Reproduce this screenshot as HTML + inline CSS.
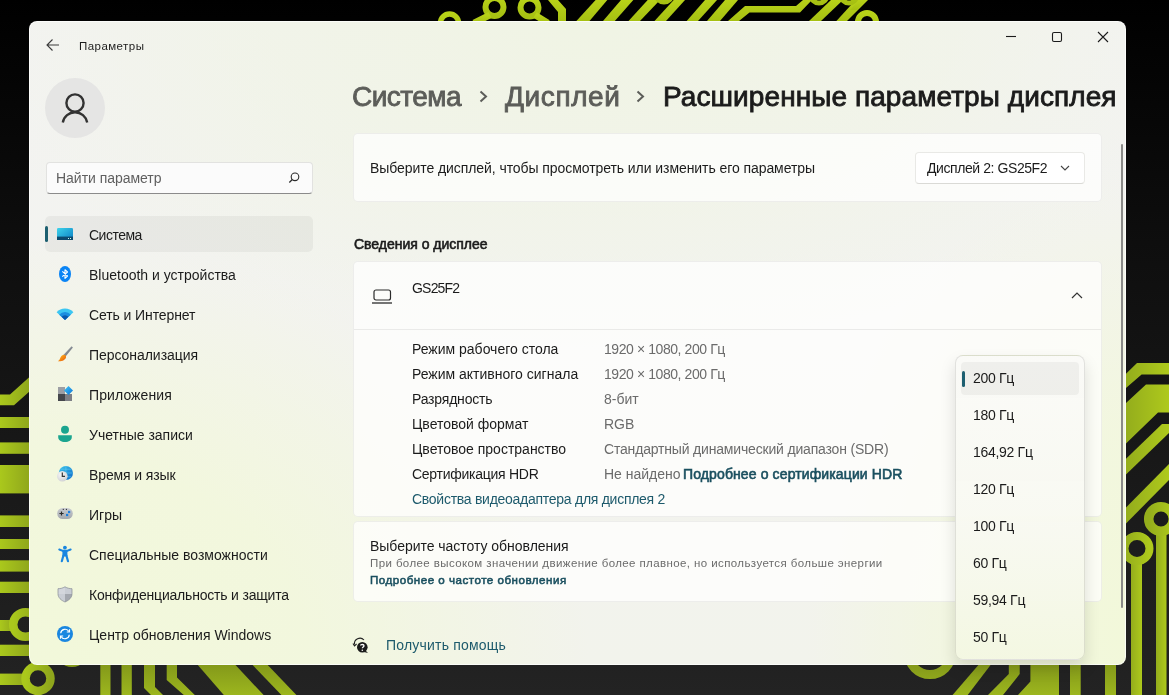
<!DOCTYPE html>
<html><head><meta charset="utf-8"><style>
html,body{margin:0;padding:0;width:1169px;height:695px;overflow:hidden;background:#111;}
body{position:relative;font-family:"Liberation Sans", sans-serif;}
.t{position:absolute;line-height:1;white-space:nowrap;will-change:transform;}
</style></head><body>
<svg width="1169" height="695" style="position:absolute;left:0;top:0">
<defs>
<linearGradient id="dk" x1="0" y1="0" x2="0" y2="1"><stop offset="0" stop-color="#000"/><stop offset="0.35" stop-color="#0e0e0e"/><stop offset="1" stop-color="#232323"/></linearGradient>
<linearGradient id="lt" x1="0" y1="0" x2="0" y2="1"><stop offset="0" stop-color="#b8d218"/><stop offset="1" stop-color="#a6c012"/></linearGradient>
<linearGradient id="ll" x1="0" y1="0" x2="1" y2="0"><stop offset="0" stop-color="#aac81c"/><stop offset="1" stop-color="#8fa61c"/></linearGradient>
<linearGradient id="lb" gradientUnits="userSpaceOnUse" x1="0" y1="665" x2="0" y2="695"><stop offset="0" stop-color="#84991a"/><stop offset="1" stop-color="#9cb61e"/></linearGradient>
<linearGradient id="lr" x1="0" y1="0" x2="1" y2="0"><stop offset="0" stop-color="#94ad1c"/><stop offset="1" stop-color="#aec91c"/></linearGradient>
</defs>
<rect width="1169" height="695" fill="url(#dk)"/>
<!-- top strip -->
<g fill="url(#lt)" stroke="none">
 <polygon points="576.4,21 589.5,21 607.3,0 595.6,0"/>
 <polygon points="603,21 614.8,21 633.3,0 621,0"/>
 <polygon points="628.5,21 640,21 660,0 647.7,0"/>
 <polygon points="654.5,21 666,21 685,0 673.7,0"/>
 <polygon points="686.7,21 698,21 717,0 705,0"/>
 <polygon points="707,21 720,21 738,0 725,0"/>
 <polygon points="728,21 739,21 749.5,12.5 800,12.5 812,0 803,0 796,6 745,6"/>
 <polygon points="809,21 821,21 843,0 831,0"/>
 <polygon points="836.4,21 847,21 868,0 855.6,0"/>
 <polygon points="850,10 857,10 866,0 859,0"/>
 <polygon points="548,0 558,0 566,9 566,21 558,21 558,12"/>
</g>
<g fill="none" stroke="url(#lt)">
 <circle cx="449.5" cy="23" r="9" stroke-width="5.5"/>
 <circle cx="494.5" cy="7" r="9" stroke-width="6"/>
 <path d="M490 15 L474 23" stroke-width="6.5"/>
 <circle cx="529.5" cy="7.5" r="9" stroke-width="6"/>
 <path d="M535 15 L548 23" stroke-width="6.5"/>
 <circle cx="664" cy="-6" r="8" stroke-width="5"/>
 <circle cx="819" cy="-5" r="8" stroke-width="5"/>
 <circle cx="849" cy="-5" r="8" stroke-width="5"/>
 <circle cx="867" cy="22" r="9" stroke-width="6"/>
</g>
<!-- left strip -->
<g fill="url(#ll)" stroke="none">
 <polygon points="0,394.5 10,394.5 30,376.5 30,391 14,405.3 0,405.3"/>
 <rect x="0" y="417" width="30" height="11"/>
 <rect x="0" y="442.4" width="30" height="11.4"/>
 <rect x="0" y="465" width="30" height="28.4"/>
 <rect x="0" y="515.4" width="30" height="11.6"/>
 <rect x="0" y="539" width="30" height="10"/>
 <rect x="0" y="560.3" width="30" height="11.3"/>
 <rect x="0" y="581.7" width="30" height="11.3"/>
 <rect x="0" y="620" width="15" height="11"/>
 <rect x="0" y="644.7" width="30" height="11.3"/>
 <rect x="0" y="673.6" width="28" height="11.4"/>
</g>
<g fill="none" stroke="url(#ll)">
 <circle cx="25.5" cy="624.5" r="12.3" stroke-width="8.5"/>
 <circle cx="38" cy="678.5" r="12.5" stroke-width="8.5"/>
</g>
<!-- bottom strip -->
<g fill="url(#lb)" stroke="none">
 <rect x="100.3" y="660" width="10.2" height="40"/>
 <rect x="121.5" y="660" width="10.3" height="40"/>
 <polygon points="144,660 155,660 155,687 163,695 151,695 144,688"/>
 <polygon points="166.7,660 177,660 177,677.6 194.8,695 183.8,695 166.7,680"/>
 <polygon points="197.8,665 235.5,665 263.6,695 223.8,695"/>
 <polygon points="252.6,665 267.7,665 296.4,695 281.4,695"/>
 <polygon points="982.7,660 994.4,660 967.7,695 952.6,695"/>
 <polygon points="1008.8,660 1019.7,660 1019.7,674 1003,695 988,695 1008.8,674"/>
 <polygon points="1030.4,660 1059,660 1059,695 1018,695 1030.4,681.5"/>
 <rect x="1070" y="660" width="10.7" height="40"/>
 <rect x="1105" y="660" width="11" height="40"/>
</g>
<g fill="none" stroke="url(#lb)">
 <circle cx="72" cy="650" r="13" stroke-width="8"/>
 <circle cx="930" cy="653" r="21.5" stroke-width="9"/>
</g>
<!-- right strip -->
<g fill="url(#lr)" stroke="none">
 <polygon points="1126,373.7 1137,363 1169,363 1169,374.5 1141.6,374.5 1126,388"/>
 <polygon points="1126,403 1146,384.5 1169,384.5 1169,412.6 1158,412.6 1126,443.5"/>
 <polygon points="1126,458.7 1162,424 1169,424 1169,433 1126,474.5"/>
 <polygon points="1126,507.6 1169,464 1169,480 1126,523.5"/>
 <rect x="1131" y="557" width="11" height="150"/>
 <rect x="1156" y="527" width="10.5" height="180"/>
</g>
<g fill="none" stroke="url(#lr)">
 <circle cx="1137" cy="548.5" r="12.5" stroke-width="8"/>
 <circle cx="1161" cy="519" r="12.3" stroke-width="9.5"/>
</g>
</svg>
<div style="position:absolute;left:29px;top:21px;width:1097px;height:644px;background:radial-gradient(ellipse 560px 430px at 0px 644px, rgba(242,248,218,1) 0%, rgba(242,248,218,0.8) 50%, rgba(242,248,218,0) 100%),radial-gradient(ellipse 320px 470px at 1097px 620px, rgba(242,248,218,1) 0%, rgba(242,248,218,0.75) 45%, rgba(242,248,218,0) 100%),radial-gradient(ellipse 640px 330px at 560px 0px, rgba(240,244,228,1) 0%, rgba(240,244,228,0.6) 55%, rgba(240,244,228,0) 100%),linear-gradient(to bottom, #f3f3f2 0%, #f2f3ec 100%);border-radius:8px;overflow:hidden;box-shadow:inset 0 0 0 1px rgba(255,255,255,0.7);"></div>
<svg style="position:absolute;left:44px;top:37px" width="18" height="16"><path d="M3 8 H15 M8.5 2.5 L3 8 L8.5 13.5" fill="none" stroke="#3b3b3b" stroke-width="1.1"/></svg>
<div class="t" style="left:79.3px;top:40.57px;font-size:11.5px;color:#1d1d1d;letter-spacing:0.45px;">Параметры</div>
<svg style="position:absolute;left:1000px;top:28px" width="120" height="20"><path d="M6 8.5 H16" stroke="#1b1b1b" stroke-width="1.1"/><rect x="52.5" y="4.5" width="9" height="9" rx="1.5" fill="none" stroke="#1b1b1b" stroke-width="1.1"/><path d="M98 4 L108 14 M108 4 L98 14" stroke="#1b1b1b" stroke-width="1.1"/></svg>
<div style="position:absolute;left:45px;top:78px;width:60px;height:60px;border-radius:50%;background:#e5e5e4;"></div>
<svg style="position:absolute;left:45px;top:78px" width="60" height="60"><circle cx="30" cy="25" r="8.6" fill="none" stroke="#323232" stroke-width="2.4"/><path d="M17.8 44.5 A12.4 12.4 0 0 1 42.2 44.5" fill="none" stroke="#323232" stroke-width="2.4"/></svg>
<div style="position:absolute;left:46px;top:162px;width:267px;height:32px;box-sizing:border-box;border-radius:4px;background:#fbfbfb;border:1px solid #e2e2e0;border-bottom:1px solid #8b8b8b;"></div>
<div class="t" style="left:55.5px;top:171.15px;font-size:14px;color:#5f5f5f;letter-spacing:-0.03px;">Найти параметр</div>
<svg style="position:absolute;left:285px;top:170px" width="16" height="16"><circle cx="10" cy="6.8" r="3.8" fill="none" stroke="#2b2b2b" stroke-width="1.1"/><path d="M7.3 9.5 L4.3 12.5" stroke="#2b2b2b" stroke-width="1.2"/></svg>
<div style="position:absolute;left:45px;top:216px;width:268px;height:36px;border-radius:5px;background:rgba(0,0,0,0.045);"></div>
<div style="position:absolute;left:45px;top:226px;width:3px;height:16px;border-radius:2px;background:#1d5f70;"></div>
<div class="t" style="left:89px;top:228.15px;font-size:14px;color:#1b1b1b;letter-spacing:-0.5px;">Система</div>
<div class="t" style="left:89px;top:268.15px;font-size:14px;color:#1b1b1b;">Bluetooth и устройства</div>
<div class="t" style="left:89px;top:308.15px;font-size:14px;color:#1b1b1b;letter-spacing:-0.1px;">Сеть и Интернет</div>
<div class="t" style="left:89px;top:348.15px;font-size:14px;color:#1b1b1b;letter-spacing:-0.05px;">Персонализация</div>
<div class="t" style="left:89px;top:388.15px;font-size:14px;color:#1b1b1b;letter-spacing:0.1px;">Приложения</div>
<div class="t" style="left:89px;top:428.15px;font-size:14px;color:#1b1b1b;">Учетные записи</div>
<div class="t" style="left:89px;top:468.15px;font-size:14px;color:#1b1b1b;letter-spacing:-0.12px;">Время и язык</div>
<div class="t" style="left:89px;top:508.15px;font-size:14px;color:#1b1b1b;">Игры</div>
<div class="t" style="left:89px;top:548.15px;font-size:14px;color:#1b1b1b;">Специальные возможности</div>
<div class="t" style="left:89px;top:588.15px;font-size:14px;color:#1b1b1b;letter-spacing:-0.2px;">Конфиденциальность и защита</div>
<div class="t" style="left:89px;top:628.15px;font-size:14px;color:#1b1b1b;">Центр обновления Windows</div>

<svg style="position:absolute;left:55px;top:224px" width="20" height="20">
 <defs><linearGradient id="sysg" x1="0" y1="0" x2="1" y2="1"><stop offset="0" stop-color="#3fd3ea"/><stop offset="1" stop-color="#0a7fc4"/></linearGradient></defs>
 <rect x="2" y="4" width="16" height="12" rx="1.3" fill="url(#sysg)"/>
 <rect x="2" y="12.6" width="16" height="3.4" fill="#0d4a6e"/>
 <rect x="13" y="14" width="1" height="1" fill="#cfe"/><rect x="15" y="14" width="1" height="1" fill="#cfe"/>
</svg>
<svg style="position:absolute;left:55px;top:264px" width="20" height="20">
 <ellipse cx="10" cy="10" rx="6" ry="8" fill="#0a84f5"/>
 <path d="M7.3 7.3 L12.5 12 L10 14.3 V5.7 L12.5 8 L7.3 12.7" fill="none" stroke="#fff" stroke-width="1.1" stroke-linejoin="round"/>
</svg>
<svg style="position:absolute;left:55px;top:304px" width="20" height="20">
 <path d="M10 15.9 L1.6 8.34 A11.3 11.3 0 0 1 18.4 8.34 Z" fill="#3cc6f2"/>
 <path d="M10 15.9 L4.2 10.68 A7.8 7.8 0 0 1 15.8 10.68 Z" fill="#1a8ee0"/>
 <path d="M10 15.9 L6.58 12.82 A4.6 4.6 0 0 1 13.42 12.82 Z" fill="#0a58ad"/>
</svg>
<svg style="position:absolute;left:55px;top:344px" width="20" height="20">
 <defs><linearGradient id="brh" x1="0" y1="0" x2="1" y2="1"><stop offset="0" stop-color="#a4aab2"/><stop offset="1" stop-color="#646a72"/></linearGradient>
 <linearGradient id="brt" x1="0" y1="0" x2="1" y2="1"><stop offset="0" stop-color="#ffc21a"/><stop offset="1" stop-color="#e8560c"/></linearGradient></defs>
 <path d="M16.6 2.3 L17.9 3.6 L10.6 12.6 L8.4 11 Z" fill="url(#brh)"/>
 <path d="M8.2 10.9 C10 10.4 11.5 11.6 11 13.4 C10.4 15.6 7.2 17.6 2.8 17.2 C4.4 16.4 4.8 15 5.6 13.2 C6.2 11.9 7 11.1 8.2 10.9 Z" fill="url(#brt)"/>
</svg>
<svg style="position:absolute;left:55px;top:384px" width="20" height="20">
 <defs><linearGradient id="apd" x1="0" y1="0" x2="1" y2="1"><stop offset="0" stop-color="#42c6f7"/><stop offset="1" stop-color="#0b72d6"/></linearGradient></defs>
 <rect x="3" y="3" width="7" height="7" fill="#9c9ea4"/>
 <rect x="3" y="10" width="7" height="7" fill="#45474c"/>
 <rect x="10" y="10" width="7" height="7" fill="#7d7f85"/>
 <path d="M13.5 1.9 L18 6.4 L13.5 10.9 L9 6.4 Z" fill="url(#apd)"/>
</svg>
<svg style="position:absolute;left:55px;top:424px" width="20" height="20">
 <circle cx="10" cy="5.8" r="4" fill="#1ba58f"/>
 <path d="M3.2 11.3 H16.8 V13 C16.8 16.3 13.8 18 10 18 C6.2 18 3.2 16.3 3.2 13 Z" fill="#1ba58f"/>
</svg>
<svg style="position:absolute;left:55px;top:464px" width="20" height="20">
 <defs><linearGradient id="glb" x1="0" y1="0" x2="1" y2="1"><stop offset="0" stop-color="#3fc8ec"/><stop offset="1" stop-color="#0b66c8"/></linearGradient>
 <radialGradient id="clk" cx="0.4" cy="0.35" r="0.7"><stop offset="0" stop-color="#f8f8f8"/><stop offset="1" stop-color="#cfd0d3"/></radialGradient></defs>
 <circle cx="10.9" cy="9" r="7.1" fill="url(#glb)"/>
 <path d="M4 9 H17.8 M10.9 2 V16 M5.5 5.2 H16.3 M5.5 12.8 H16.3" stroke="#6fd8f6" stroke-width="0.6" fill="none" opacity="0.8"/>
 <circle cx="7.3" cy="12.2" r="5.3" fill="url(#clk)"/>
 <path d="M7.3 8.6 V12.4 H10" stroke="#333" stroke-width="1.2" fill="none"/>
</svg>
<svg style="position:absolute;left:55px;top:504px" width="20" height="20">
 <defs><linearGradient id="gmp" x1="0" y1="0" x2="0" y2="1"><stop offset="0" stop-color="#c9ccd1"/><stop offset="1" stop-color="#a4a8ae"/></linearGradient></defs>
 <rect x="2.2" y="4" width="15.6" height="11" rx="5.5" fill="url(#gmp)"/>
 <path d="M4.4 9.5 H8.6 M6.5 7.4 V11.6" stroke="#2b2b2b" stroke-width="1.2"/>
 <circle cx="8.3" cy="5.4" r="0.6" fill="#333"/><circle cx="11.4" cy="5.4" r="0.6" fill="#333"/>
 <rect x="13" y="6.9" width="2.2" height="2.2" fill="#1a7fe0"/><rect x="11" y="9.9" width="2.2" height="2.2" fill="#1a7fe0"/>
</svg>
<svg style="position:absolute;left:55px;top:544px" width="20" height="20">
 <circle cx="9.9" cy="3.6" r="1.9" fill="#1a86e0"/>
 <path d="M4.3 5.5 L7.8 6.9 H12.1 L15.6 5.5" stroke="#1a86e0" stroke-width="2.1" fill="none" stroke-linecap="round" stroke-linejoin="round"/>
 <rect x="7.4" y="6.4" width="5" height="6" rx="0.6" fill="#1a86e0"/>
 <path d="M8.4 11.5 L6.8 17.2 M11.4 11.5 L13 17.2" stroke="#1a86e0" stroke-width="2.2" fill="none" stroke-linecap="round"/>
</svg>
<svg style="position:absolute;left:55px;top:584px" width="20" height="20">
 <defs><clipPath id="shc"><path d="M10 2.8 C12.3 4.2 14.8 4.7 17 4.7 V9.8 C17 13.6 14 16.3 10 18 C6 16.3 3 13.6 3 9.8 V4.7 C5.2 4.7 7.7 4.2 10 2.8 Z"/></clipPath></defs>
 <path d="M10 2.8 C12.3 4.2 14.8 4.7 17 4.7 V9.8 C17 13.6 14 16.3 10 18 C6 16.3 3 13.6 3 9.8 V4.7 C5.2 4.7 7.7 4.2 10 2.8 Z" fill="#c9cdd4"/>
 <g clip-path="url(#shc)"><rect x="10" y="10" width="10" height="10" fill="#a3a7ae"/><rect x="3" y="2" width="7" height="8" fill="#d3d6dc"/></g>
 <path d="M10 2.8 C12.3 4.2 14.8 4.7 17 4.7 V9.8 C17 13.6 14 16.3 10 18 C6 16.3 3 13.6 3 9.8 V4.7 C5.2 4.7 7.7 4.2 10 2.8 Z" fill="none" stroke="#878b93" stroke-width="0.7"/>
</svg>
<svg style="position:absolute;left:55px;top:624px" width="20" height="20">
 <circle cx="10" cy="10" r="8" fill="#1a86e0"/>
 <path d="M5.7 9.3 A4.4 4.4 0 0 1 13.9 7.5 M14.3 10.7 A4.4 4.4 0 0 1 6.1 12.5" stroke="#fff" stroke-width="1.2" fill="none"/>
 <path d="M14.5 5.3 V8 H11.8 M5.5 14.7 V12 H8.2" stroke="#fff" stroke-width="1.2" fill="none"/>
</svg>

<div class="t" style="left:352px;top:82.80px;font-size:28px;color:#5c5d59;letter-spacing:-0.55px;-webkit-text-stroke:0.85px #5c5d59;">Система</div>
<svg style="position:absolute;left:475px;top:86px" width="20" height="20"><path d="M5.5 5.5 L11 10.5 L5.5 15.5" fill="none" stroke="#5c5d59" stroke-width="2"/></svg>
<div class="t" style="left:505px;top:82.80px;font-size:28px;color:#5c5d59;letter-spacing:0.6px;-webkit-text-stroke:0.85px #5c5d59;">Дисплей</div>
<svg style="position:absolute;left:632px;top:86px" width="20" height="20"><path d="M5.5 5.5 L11 10.5 L5.5 15.5" fill="none" stroke="#5c5d59" stroke-width="2"/></svg>
<div class="t" style="left:662.5px;top:82.80px;font-size:28px;color:#1b1b1b;letter-spacing:0.08px;-webkit-text-stroke:0.85px #1b1b1b;">Расширенные параметры дисплея</div>
<div style="position:absolute;left:353px;top:133px;width:749px;height:69px;box-sizing:border-box;border-radius:5px;background:rgba(255,255,255,0.72);border:1px solid rgba(0,0,0,0.06);"></div>
<div class="t" style="left:369.5px;top:161.15px;font-size:14px;color:#1b1b1b;letter-spacing:-0.07px;">Выберите дисплей, чтобы просмотреть или изменить его параметры</div>
<div style="position:absolute;left:915px;top:152px;width:170px;height:32px;box-sizing:border-box;border-radius:4px;background:rgba(255,255,255,0.85);border:1px solid #e9e9e6;border-bottom-color:#dadad6;"></div>
<div class="t" style="left:927px;top:161.15px;font-size:14px;color:#1b1b1b;letter-spacing:-0.42px;">Дисплей 2: GS25F2</div>
<svg style="position:absolute;left:1058px;top:162px" width="14" height="12"><path d="M3 4 L7 8 L11 4" fill="none" stroke="#444" stroke-width="1.1"/></svg>
<div class="t" style="left:353.5px;top:237.15px;font-size:14px;color:#1b1b1b;letter-spacing:-0.02px;-webkit-text-stroke:0.6px #1b1b1b;">Сведения о дисплее</div>
<div style="position:absolute;left:353px;top:261px;width:749px;height:256px;box-sizing:border-box;border-radius:5px;background:rgba(255,255,255,0.72);border:1px solid rgba(0,0,0,0.06);"></div>
<div style="position:absolute;left:354px;top:329px;width:747px;height:1px;background:rgba(0,0,0,0.07);"></div>
<svg style="position:absolute;left:370px;top:285px" width="24" height="22"><rect x="4" y="5" width="16.5" height="10" rx="2" fill="none" stroke="#2b2b2b" stroke-width="1.2"/><path d="M2 18 H22" stroke="#2b2b2b" stroke-width="1.3"/></svg>
<div class="t" style="left:411.5px;top:281.15px;font-size:14px;color:#1b1b1b;letter-spacing:-0.8px;">GS25F2</div>
<svg style="position:absolute;left:1068px;top:288px" width="18" height="14"><path d="M4 10 L9 5 L14 10" fill="none" stroke="#333" stroke-width="1.2"/></svg>
<div class="t" style="left:411.5px;top:342.15px;font-size:14px;color:#1b1b1b;">Режим рабочего стола</div>
<div class="t" style="left:604px;top:342.15px;font-size:14px;color:#6b6b6b;letter-spacing:-0.42px;">1920 × 1080, 200 Гц</div>
<div class="t" style="left:411.5px;top:367.15px;font-size:14px;color:#1b1b1b;">Режим активного сигнала</div>
<div class="t" style="left:604px;top:367.15px;font-size:14px;color:#6b6b6b;letter-spacing:-0.42px;">1920 × 1080, 200 Гц</div>
<div class="t" style="left:411.5px;top:392.15px;font-size:14px;color:#1b1b1b;letter-spacing:-0.2px;">Разрядность</div>
<div class="t" style="left:604px;top:392.15px;font-size:14px;color:#6b6b6b;">8-бит</div>
<div class="t" style="left:411.5px;top:417.15px;font-size:14px;color:#1b1b1b;">Цветовой формат</div>
<div class="t" style="left:604px;top:417.15px;font-size:14px;color:#6b6b6b;">RGB</div>
<div class="t" style="left:411.5px;top:442.15px;font-size:14px;color:#1b1b1b;">Цветовое пространство</div>
<div class="t" style="left:604px;top:442.15px;font-size:14px;color:#6b6b6b;letter-spacing:-0.18px;">Стандартный динамический диапазон (SDR)</div>
<div class="t" style="left:411.5px;top:467.15px;font-size:14px;color:#1b1b1b;letter-spacing:-0.27px;">Сертификация HDR</div>
<div class="t" style="left:604px;top:467.15px;font-size:14px;color:#6b6b6b;">Не найдено</div>
<div class="t" style="left:683.3px;top:467.15px;font-size:14px;color:#1a4f5f;letter-spacing:0.12px;-webkit-text-stroke:0.6px #1a4f5f;">Подробнее о сертификации HDR</div>
<div class="t" style="left:411.5px;top:492.15px;font-size:14px;color:#1d5a6c;letter-spacing:-0.27px;">Свойства видеоадаптера для дисплея 2</div>
<div style="position:absolute;left:353px;top:521px;width:749px;height:81px;box-sizing:border-box;border-radius:5px;background:rgba(255,255,255,0.72);border:1px solid rgba(0,0,0,0.06);"></div>
<div class="t" style="left:369.5px;top:539.15px;font-size:14px;color:#1b1b1b;letter-spacing:-0.03px;">Выберите частоту обновления</div>
<div class="t" style="left:369.5px;top:557.77px;font-size:11.5px;color:#6b6b6b;letter-spacing:0.4px;">При более высоком значении движение более плавное, но используется больше энергии</div>
<div class="t" style="left:370px;top:574.18px;font-size:11.6px;color:#1a4f5f;letter-spacing:0.5px;-webkit-text-stroke:0.55px #1a4f5f;">Подробнее о частоте обновления</div>
<svg style="position:absolute;left:351px;top:636px" width="20" height="20"><path d="M3.5 8.5 A5.5 5.5 0 0 1 13 4" fill="none" stroke="#222" stroke-width="1.1"/><path d="M2 7.5 L3.5 9.8 L5.6 8" fill="none" stroke="#222" stroke-width="1.1"/><circle cx="11.3" cy="11.3" r="5.3" fill="#1b1b1b"/><path d="M14.5 14.5 L17 17 L13 16" fill="#1b1b1b"/><path d="M9.6 9.6 C9.6 8.1 13 8.1 13 9.7 C13 10.9 11.3 11 11.3 12.3" fill="none" stroke="#fff" stroke-width="1.3"/><circle cx="11.3" cy="14.2" r="0.8" fill="#fff"/></svg>
<div class="t" style="left:385.8px;top:638.15px;font-size:14px;color:#1d5a6c;letter-spacing:0.2px;">Получить помощь</div>
<div style="position:absolute;left:1121px;top:144px;width:2px;height:464px;background:#8a8a88;border-radius:1px;"></div>
<div style="position:absolute;left:955px;top:355px;width:130px;height:305px;box-sizing:border-box;border-radius:8px;background:linear-gradient(to bottom, rgba(250,250,247,0.97) 0%, rgba(248,249,241,0.96) 55%, rgba(243,247,226,0.96) 100%);border:1px solid rgba(0,0,0,0.1);box-shadow:0 8px 16px rgba(0,0,0,0.13);"></div>
<div style="position:absolute;left:961px;top:362px;width:118px;height:33px;border-radius:4px;background:rgba(0,0,0,0.045);"></div>
<div style="position:absolute;left:962px;top:371px;width:3px;height:16px;border-radius:2px;background:#1d5f70;"></div>
<div class="t" style="left:973px;top:371.15px;font-size:14px;color:#1b1b1b;letter-spacing:-0.3px;">200 Гц</div>
<div class="t" style="left:973px;top:408.15px;font-size:14px;color:#1b1b1b;letter-spacing:-0.3px;">180 Гц</div>
<div class="t" style="left:973px;top:445.15px;font-size:14px;color:#1b1b1b;letter-spacing:-0.3px;">164,92 Гц</div>
<div class="t" style="left:973px;top:482.15px;font-size:14px;color:#1b1b1b;letter-spacing:-0.3px;">120 Гц</div>
<div class="t" style="left:973px;top:519.15px;font-size:14px;color:#1b1b1b;letter-spacing:-0.3px;">100 Гц</div>
<div class="t" style="left:973px;top:556.15px;font-size:14px;color:#1b1b1b;letter-spacing:-0.3px;">60 Гц</div>
<div class="t" style="left:973px;top:593.15px;font-size:14px;color:#1b1b1b;letter-spacing:-0.3px;">59,94 Гц</div>
<div class="t" style="left:973px;top:630.15px;font-size:14px;color:#1b1b1b;letter-spacing:-0.3px;">50 Гц</div>
</body></html>
